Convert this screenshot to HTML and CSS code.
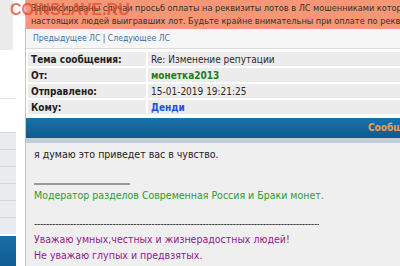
FILE: index.html
```html
<!DOCTYPE html>
<html lang="ru">
<head>
  <meta charset="UTF-8" />
  <title>Личные сообщения</title>
  <link rel="stylesheet" href="styles.css">
</head>
<body>

<div class="watermark">COINSLAVE.RU</div>

<div class="page">
  <aside class="side">
    <div class="side-top"></div>
    <div class="side-gap"></div>
    <ul class="side-menu">
      <li></li><li></li><li></li><li></li><li></li><li></li>
    </ul>
    <div class="side-head"></div>
  </aside>

  <main class="main">
    <div class="warning">
      <span>Зафиксированы случаи просьб оплаты на реквизиты лотов в ЛС мошенниками которые выдают себя за</span>
      <span>настоящих людей выигравших лот. Будьте крайне внимательны при оплате по реквизитам из ЛС.</span>
    </div>

    <div class="pm-nav">
      <a href="#">Предыдущее ЛС</a> | <a href="#">Следующее ЛС</a>
    </div>

    <table class="pm-info">
      <tr><th>Тема сообщения:</th><td>Re: Изменение репутации</td></tr>
      <tr><th>От:</th><td><b class="user-green">монетка2013</b></td></tr>
      <tr><th>Отправлено:</th><td>15-01-2019 19:21:25</td></tr>
      <tr><th>Кому:</th><td><b class="user-blue">Денди</b></td></tr>
    </table>

    <div class="msg-head">Сообщение</div>
    <div class="msg-strip"></div>

    <div class="msg-body">
      <p>я думаю это приведет вас в чувство.</p>
      <div class="sig">
        <hr class="sig-line">
        <p class="sig-green">Модератор разделов Современная Россия и Браки монет.</p>
        <p class="sig-dash">----------------------------------------------------------------------------------------------------------</p>
        <p class="sig-purple">Уважаю умных,честных и жизнерадостных людей!</p>
        <p class="sig-purple">Не уважаю глупых и предвзятых.</p>
      </div>
    </div>
  </main>
</div>

</body>
</html>
```

FILE: styles.css
```css
body {
  margin: 0;
  background-color: #fff;
  font-family: 'DejaVu Sans Condensed', Tahoma, sans-serif;
  font-size: 10px;
  color: #222;
  overflow: hidden;
}

.watermark {
  position: absolute;
  left: 10px;
  top: 1px;
  font-family: 'Liberation Sans', Arial, sans-serif;
  font-weight: bold;
  font-size: 16px;
  color: rgba(222, 72, 38, 0.72);
}

.page {
  display: flex;
  gap: 9px;
  width: 600px;
}

/* left column */
.side {
  width: 16px;
  flex-shrink: 0;
}

.side-top {
  height: 50px;
  width: 13px;
  background-color: #ebebeb;
  border-right: 1px solid #fff;
}

.side-gap {
  height: 48px;
  border-bottom: 1px solid #e4e4e4;
  margin-bottom: 33px;
}

.side-menu {
  list-style: none;
  margin: 0;
  padding: 0;
}

.side-menu li {
  height: 16px;
  background-color: #e9ebee;
  border-top: 1px solid #d4d8dc;
}

.side-head {
  margin-top: 2px;
  height: 30px;
  background: linear-gradient(#1a6ea6, #0f5d92);
}

/* main column */
.main {
  flex: 1;
  border-left: 1px solid #c4c4c4;
}

.warning {
  background-color: #f59676;
  color: #333;
  font-size: 9.1px;
  padding: 2px 0 3px 5px;
  line-height: 12.5px;
  height: 24px;
}

.warning span {
  display: block;
  white-space: nowrap;
}

.pm-nav {
  background-color: #f6f6f6;
  padding: 4px 7px 5px;
  height: 10px;
  line-height: 10px;
  font-size: 8.6px;
  border-bottom: 1px solid #dcdcdc;
  color: #555;
  margin-bottom: 1px;
}

.pm-nav a {
  color: #3772a6;
  text-decoration: none;
}

.pm-info {
  width: 100%;
  border-collapse: collapse;
  border: 1px solid #c8c8c8;
}

.pm-info th,
.pm-info td {
  height: 14px;
  padding: 0 3px;
  text-align: left;
  border: 2px solid #fff;
  background-color: #ececec;
  font-size: 10px;
  white-space: nowrap;
}

.pm-info th {
  width: 112px;
  font-weight: bold;
  color: #1e1e1e;
}

.pm-info td {
  color: #2a2a2a;
}

.user-green {
  color: #1d7d1d;
}

.user-blue {
  color: #1d4fe0;
}

.msg-head {
  margin-top: 2px;
  height: 20px;
  line-height: 20px;
  background: linear-gradient(#1b71a8, #0d5b8f);
  color: #eea04c;
  font-weight: bold;
  padding-left: 342px;
}

.msg-strip {
  height: 5px;
  background-color: #c9cdd2;
}

.msg-body {
  background-color: #efefef;
  font-size: 10.5px;
  padding: 3px 8px 20px;
  min-height: 120px;
}

.msg-body p {
  margin: 0;
  line-height: 16px;
}

.sig {
  margin-top: 21px;
}

.sig-line {
  width: 96px;
  margin: 0 0 2px;
  border: none;
  border-top: 2px solid #9a9a9a;
}

.sig-green {
  color: #2f9a2f;
}

.msg-body .sig-dash {
  margin-top: 12px;
  width: 285px;
  overflow: hidden;
  letter-spacing: -0.4px;
  color: #333;
  white-space: nowrap;
}

.sig-purple {
  color: #8d1b8d;
}
```
